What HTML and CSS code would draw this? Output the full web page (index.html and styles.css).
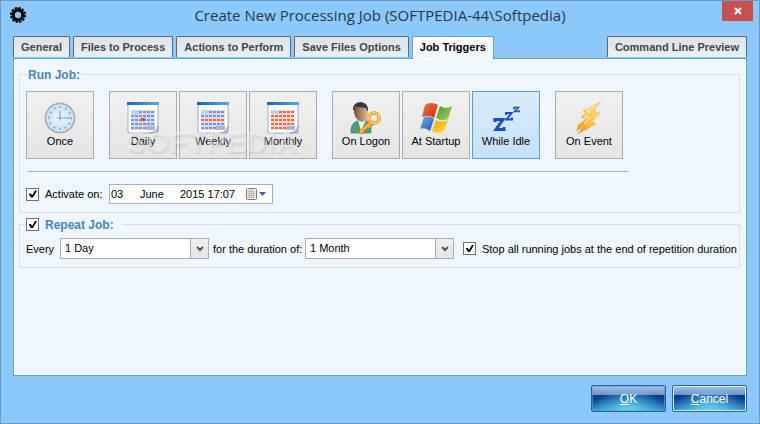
FILE: index.html
```
<!DOCTYPE html>
<html lang="en">
<head>
    <meta charset="UTF-8">
    <meta name="viewport" content="width=device-width, initial-scale=1.0">
    <title>Create New Processing Job</title>
    <link rel="stylesheet" href="styles.css">
</head>
<body>
    <!-- shared calendar parts and colours -->
    <svg class="defs" width="0" height="0" aria-hidden="true">
        <defs>
            <linearGradient id="calTop" x1="0" x2="1" y1="0" y2="0"><stop offset="0" stop-color="#1f63b5"/><stop offset="1" stop-color="#55aae6"/></linearGradient>
            <pattern id="blueDots" width="4" height="4" patternUnits="userSpaceOnUse"><rect width="4" height="4" fill="#d5dcf5"/><rect width="3" height="2" y="1" fill="#7f93d6"/></pattern>
            <pattern id="redDots" width="4" height="4" patternUnits="userSpaceOnUse"><rect width="4" height="4" fill="#ffe0cc"/><rect width="3" height="2" y="1" fill="#f8604f"/></pattern>
            <g id="calendar">
                <path d="M1 1H31V26L26 31H1Z" fill="#fff" stroke="#9aaccc"/>
                <rect x="0" y="0" width="32" height="3" fill="url(#calTop)"/>
                <rect x="4" y="8" width="8" height="4" fill="#b4d5f0"/>
                <rect x="19" y="24" width="9" height="4" fill="#aab3d8"/>
                <path d="M31 24V31H23Q30 30 31 24Z" fill="#b9c0e6" stroke="#8790c6" stroke-width=".7"/>
            </g>
        </defs>
    </svg>

    <form class="window">
        <header class="titlebar">
            <svg class="gear" width="16" height="16" viewBox="0 0 16 16">
                <circle cx="8" cy="8" r="7" fill="none" stroke="#000" stroke-width="2" stroke-dasharray="2.4 1.265"/>
                <circle cx="8" cy="8" r="4.8" fill="none" stroke="#000" stroke-width="3.2"/>
            </svg>
            <h1>Create New Processing Job (SOFTPEDIA-44\Softpedia)</h1>
            <button type="button" class="close" aria-label="Close">
                <svg width="8" height="8" viewBox="0 0 8 8"><path d="M1 1L7 7M7 1L1 7" stroke="#fff" stroke-width="2"/></svg>
            </button>
        </header>

        <nav class="tabs">
            <button type="button" class="tab">General</button>
            <button type="button" class="tab">Files to Process</button>
            <button type="button" class="tab">Actions to Perform</button>
            <button type="button" class="tab">Save Files Options</button>
            <button type="button" class="tab active">Job Triggers</button>
            <button type="button" class="tab last">Command Line Preview</button>
        </nav>

        <main class="panel">
            <fieldset class="group">
                <legend>Run Job:</legend>
                <div class="tiles">
                    <div class="tile-set">
                        <button type="button" class="tile">
                            <svg width="32" height="32" viewBox="0 0 32 32">
                                <defs><radialGradient id="face"><stop offset="0" stop-color="#f2faff"/><stop offset="1" stop-color="#b9ddf8"/></radialGradient></defs>
                                <circle cx="16" cy="16" r="14.4" fill="url(#face)" stroke="#a9b2bb" stroke-width="2"/>
                                <circle cx="16" cy="16" r="13" fill="none" stroke="#e5edf3"/>
                                <circle cx="16" cy="16" r="11" fill="none" stroke="#6d8194" stroke-width="2" stroke-dasharray="1 4.76" stroke-dashoffset=".5"/>
                                <path d="M16 9V19M13 16H28" stroke="#8695a2"/>
                            </svg>
                            <span>Once</span>
                        </button>
                    </div>
                    <div class="tile-set">
                        <button type="button" class="tile">
                            <svg width="32" height="32" viewBox="0 0 32 32">
                                <use href="#calendar"/>
                                <path d="M12 8H28V24H19V28H4V12H12Z" fill="url(#blueDots)"/>
                                <rect x="14" y="16" width="4" height="3" fill="#f5442f"/>
                            </svg>
                            <span>Daily</span>
                        </button>
                        <button type="button" class="tile">
                            <svg width="32" height="32" viewBox="0 0 32 32">
                                <use href="#calendar"/>
                                <path d="M12 8H28V24H19V28H4V12H12Z" fill="url(#blueDots)"/>
                                <rect x="4" y="16" width="24" height="4" fill="url(#redDots)"/>
                            </svg>
                            <span>Weekly</span>
                        </button>
                        <button type="button" class="tile">
                            <svg width="32" height="32" viewBox="0 0 32 32">
                                <use href="#calendar"/>
                                <path d="M12 8H28V24H19V28H4V12H12Z" fill="url(#redDots)"/>
                            </svg>
                            <span>Monthly</span>
                        </button>
                        <span class="watermark">SOFTPEDIA</span>
                    </div>
                    <div class="tile-set">
                        <button type="button" class="tile">
                            <svg width="32" height="32" viewBox="0 0 32 32">
                                <defs>
                                    <linearGradient id="skin"><stop offset="0" stop-color="#7e5535"/><stop offset="1" stop-color="#dcb891"/></linearGradient>
                                    <linearGradient id="gold" x2="1" y2="1"><stop offset="0" stop-color="#ffd778"/><stop offset="1" stop-color="#e98a18"/></linearGradient>
                                </defs>
                                <path d="M1 31Q0 22 7 19L16 18L21 24V31Z" fill="#4f9a78" stroke="#3b7d61" stroke-width=".6"/>
                                <path d="M8 18L11 29L16 18Z" fill="#f4f6f4"/>
                                <path d="M4 6Q5 2 11 2Q18 2 18 8Q18 19 12 20Q6 19 4 11Z" fill="url(#skin)"/>
                                <path d="M3 8Q3 0 11 0Q18 1 18 8L17 9L16 6Q10 5 5 5L5 8Z" fill="#343a40"/>
                                <path d="M21 18L9 29L9 32L14 31V28H17V26H20L24 22Z" fill="url(#gold)" stroke="#c97313" stroke-width=".7"/>
                                <circle cx="24" cy="16" r="5" fill="none" stroke="#d88a1c" stroke-width="3.6"/>
                                <circle cx="24" cy="16" r="5" fill="none" stroke="#ffd070" stroke-width="2.2"/>
                            </svg>
                            <span>On Logon</span>
                        </button>
                        <button type="button" class="tile">
                            <svg width="32" height="32" viewBox="0 0 32 32">
                                <defs>
                                    <linearGradient id="red" x2="1" y2="1"><stop offset="0" stop-color="#ee7a42"/><stop offset="1" stop-color="#cf2507"/></linearGradient>
                                    <linearGradient id="green" x2="1" y2="1"><stop offset="0" stop-color="#3d9a22"/><stop offset="1" stop-color="#a9d765"/></linearGradient>
                                    <linearGradient id="blue" x2="1" y2="1"><stop offset="0" stop-color="#73acec"/><stop offset="1" stop-color="#1d5bb3"/></linearGradient>
                                    <linearGradient id="yellow" x2="1" y2="1"><stop offset="0" stop-color="#f5a000"/><stop offset="1" stop-color="#ffe04d"/></linearGradient>
                                </defs>
                                <path d="M5 3Q11 -1 18 3L14 16Q8 12 2 15Z" fill="url(#red)"/>
                                <path d="M20 4Q26 8 32 4L28 17Q22 20 16 16Z" fill="url(#green)"/>
                                <path d="M4 15Q9 13 14 17L10 29Q5 25 0 27Z" fill="url(#blue)"/>
                                <path d="M16 18Q22 21 28 18L24 29Q18 33 12 29Z" fill="url(#yellow)"/>
                            </svg>
                            <span>At Startup</span>
                        </button>
                        <button type="button" class="tile selected" aria-pressed="true">
                            <svg width="32" height="32" viewBox="0 0 32 32">
                                <g fill="none" stroke="#1c4fbd" stroke-width="2">
                                    <path d="M5 20V17.5H13L6 27.5H14V25" stroke-width="3"/>
                                    <path d="M16 13V11H21.500L16.500 17.500H22V15.500"/>
                                    <path d="M24 7.500V5.500H28.500L24.500 9.500H29V8" stroke-width="1.500"/>
                                </g>
                            </svg>
                            <span>While Idle</span>
                        </button>
                    </div>
                    <div class="tile-set">
                        <button type="button" class="tile">
                            <svg width="32" height="32" viewBox="0 0 32 32">
                                <defs><linearGradient id="bolt" x1="1" x2="0" y2="1"><stop offset="0" stop-color="#ffe9a8"/><stop offset=".5" stop-color="#ffc64d"/><stop offset="1" stop-color="#ef8a22"/></linearGradient></defs>
                                <path d="M28 0L10 9L13 11L8 15L13 17L5 23L4 29L10 24L5 32L23 22L19 20L27 11L21 11L23 7L22 6Z" fill="url(#bolt)" stroke="#eca64c" stroke-width=".5"/>
                                <path d="M21 5L13 9L17 10L11 15L17 16L11 22" fill="none" stroke="#fff1bd"/>
                            </svg>
                            <span>On Event</span>
                        </button>
                    </div>
                </div>
                <hr>
                <div class="row activate">
                    <input type="checkbox" id="activate" checked>
                    <label for="activate">Activate on:</label>
                    <div class="datetime">
                        <input type="text" class="day" value="03" aria-label="Day">
                        <input type="text" class="month" value="June" aria-label="Month">
                        <input type="text" class="year" value="2015 17:07" aria-label="Year and time">
                        <button type="button" aria-label="Open calendar">
                            <svg width="20" height="12" viewBox="0 0 20 12">
                                <rect x=".5" y=".5" width="10" height="11" rx="1" fill="#eee" stroke="#85736f"/>
                                <path d="M2 3.500H9M2 5.500H9M2 7.500H9M2 9.500H7M3.500 2V10M5.500 2V10M7.500 2V10" stroke="#b4aeb0" stroke-width=".8"/>
                                <path d="M13 4H20L16.500 8Z" fill="#42639b"/>
                            </svg>
                        </button>
                    </div>
                </div>
            </fieldset>

            <fieldset class="group repeat">
                <legend><input type="checkbox" id="repeat" checked><label for="repeat">Repeat Job:</label></legend>
                <div class="row">
                    <label for="every" class="every">Every</label>
                    <div class="dropdown">
                        <select id="every"><option>1 Day</option></select>
                        <svg width="8" height="6" viewBox="0 0 8 6"><path d="M1 1L4 4L7 1" fill="none" stroke="#555" stroke-width="2"/></svg>
                    </div>
                    <label for="duration" class="for">for the duration of:</label>
                    <div class="dropdown">
                        <select id="duration"><option>1 Month</option></select>
                        <svg width="8" height="6" viewBox="0 0 8 6"><path d="M1 1L4 4L7 1" fill="none" stroke="#555" stroke-width="2"/></svg>
                    </div>
                    <input type="checkbox" id="stop" checked>
                    <label for="stop">Stop all running jobs at the end of repetition duration</label>
                </div>
            </fieldset>
        </main>

        <footer class="actions">
            <button type="button" class="glossy"><u>O</u>K</button>
            <button type="button" class="glossy default"><u>C</u>ancel</button>
        </footer>
    </form>
</body>
</html>
```
FILE: styles.css
```
* {
    box-sizing: border-box;
}

body {
    margin: 0;
    font-family: "Liberation Sans", Arial, sans-serif;
    font-size: 11px;
    line-height: 14px;
    color: #000;
}

button,
input,
select {
    font: inherit;
    color: inherit;
    margin: 0;
    padding: 0;
}

svg {
    display: block;
    flex: none;
}

.defs {
    position: absolute;
}

.window {
    min-height: 100vh;
    display: flex;
    flex-direction: column;
    padding: 0 12px 11px;
    background: #8cc8fa;
    border: 1px solid #6b9ac5;
}

/* title bar */
.titlebar {
    display: grid;
    grid-template-columns: 28px 1fr 31px;
    height: 35px;
    margin: 0 -6px 0 -3px;
}

.gear {
    margin-top: 6px;
}

.titlebar h1 {
    margin: 0;
    padding-top: 4px;
    font-family: "Open Sans", "Segoe UI", sans-serif;
    font-size: 15px;
    font-weight: 400;
    line-height: 20px;
    text-align: center;
    color: #263747;
    white-space: nowrap;
}

.close {
    display: flex;
    align-items: center;
    justify-content: center;
    height: 20px;
    background: #c75050;
    border: 0;
}

/* tabs */
.tabs {
    display: flex;
    gap: 3px;
    height: 22px;
    position: relative;
}

.tab {
    height: 21px;
    padding: 0 7px;
    font-weight: bold;
    color: #444;
    white-space: nowrap;
    background: linear-gradient(#dae2ea, #e9f0f8);
    border: 1px solid #5f666d;
    border-bottom: 0;
    border-radius: 2px 2px 0 0;
}

.tab.active {
    height: 23px;
    padding-bottom: 2px;
    color: #000;
    background: linear-gradient(#fff, #f0f6fe);
    border-color: #62a5cb;
}

.tab.last {
    margin-left: auto;
}

.panel {
    flex: 1;
    padding: 8px 6px 8px 5px;
    background: #eff6fe;
    border: 1px solid #5aa3cb;
    box-shadow: inset 0 0 0 1px #fff;
}

/* groups */
.group {
    min-width: 0;
    margin: 0;
    padding: 9px 6px 8px;
    border: 1px solid #dcdcdc;
}

.group legend {
    display: flex;
    align-items: center;
    height: 15px;
    padding: 0 2px;
    font-size: 12px;
    font-weight: bold;
    color: #4786b8;
}

.tiles {
    display: flex;
    gap: 15px;
}

.tile-set {
    display: flex;
    gap: 2px;
    position: relative;
}

.tile {
    display: flex;
    flex-direction: column;
    align-items: center;
    width: 68px;
    height: 68px;
    padding-top: 10px;
    white-space: nowrap;
    background: linear-gradient(#f0f0f0, #e5e5e5);
    border: 1px solid #acacac;
}

.tile.selected {
    background: linear-gradient(#daecfc, #c4e0fc);
    border-color: #569de5;
}

.watermark {
    position: absolute;
    left: 17px;
    top: 34px;
    font-size: 30px;
    line-height: 34px;
    font-weight: bold;
    color: rgba(250, 250, 250, .4);
    text-shadow: 1px 2px 2px rgba(110, 110, 110, .16);
    pointer-events: none;
}

hr {
    width: 600px;
    max-width: 100%;
    margin: 12px 2px;
    border: 0;
    border-top: 1px solid #a0b3cc;
}

.row {
    display: flex;
    align-items: center;
    white-space: nowrap;
}

.row label {
    flex: none;
}

.row input[type="checkbox"] + label {
    margin-left: 6px;
}

input[type="checkbox"] {
    appearance: none;
    flex: none;
    width: 13px;
    height: 13px;
    background: #fff;
    border: 1px solid #707070;
}

input[type="checkbox"]:checked::before {
    content: "";
    display: block;
    width: 11px;
    height: 11px;
    background: #000;
    clip-path: polygon(2px 5px, 4px 5px, 5px 7px, 8px 2px, 10px 2px, 6px 9px, 4px 9px, 2px 6px);
}

.activate label {
    width: 64px;
}

.datetime {
    display: flex;
    align-items: center;
    width: 164px;
    height: 20px;
    padding: 0 6px 0 1px;
    background: #fff;
    border: 1px solid #abadb3;
}

.datetime input {
    height: 16px;
    background: none;
    border: 0;
}

.day {
    width: 29px;
}

.month {
    width: 40px;
}

.year {
    width: 60px;
}

.datetime button {
    margin-left: auto;
    background: none;
    border: 0;
}

.repeat {
    margin-top: 4px;
    padding: 6px 2px 8px 6px;
}

.repeat legend {
    gap: 6px;
    padding: 0 8px 0 0;
}

.every {
    width: 34px;
}

.for {
    margin-left: 4px;
    width: 92px;
}

.dropdown {
    position: relative;
    flex: 0 1 150px;
    height: 21px;
}

.dropdown + input {
    margin-left: 9px;
}

.dropdown select {
    appearance: none;
    width: 100%;
    height: 100%;
    padding: 0 22px 2px 4px;
    background: linear-gradient(#acacac, #acacac) right 17px top / 1px 100% no-repeat,
        linear-gradient(#f0f0f0, #e5e5e5) right top / 17px 100% no-repeat, #fff;
    border: 1px solid #abadb3;
    border-radius: 0;
}

.dropdown svg {
    position: absolute;
    right: 5px;
    top: 8px;
    pointer-events: none;
}

/* bottom buttons */
.actions {
    display: flex;
    justify-content: flex-end;
    gap: 6px;
    margin-top: 9px;
}

.glossy {
    width: 75px;
    height: 27px;
    font-size: 12px;
    color: #fff;
    background: radial-gradient(ellipse at 50% 100%, rgba(105, 225, 250, .9), rgba(60, 170, 220, 0) 70%),
        linear-gradient(#a9bfe2, #6f92ca 34%, #09388a 36%, #0b3f91 50%, #3798cf);
    border: 1px solid #2a5ca6;
    border-radius: 2px;
    box-shadow: inset 0 0 0 1px rgba(100, 160, 220, .6);
}

.glossy.default {
    box-shadow: inset 0 0 0 1px #d6efff;
}
```
